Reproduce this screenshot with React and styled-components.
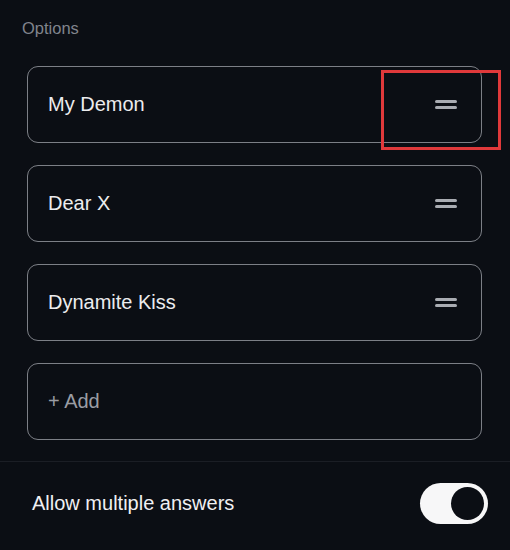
import React from "react";
import styled, { createGlobalStyle } from "styled-components";

const GlobalStyle = createGlobalStyle`
  html, body {
    margin: 0;
    padding: 0;
    background: #0b0e14;
  }
  body {
    font-family: "Liberation Sans", Arial, sans-serif;
    -webkit-font-smoothing: antialiased;
  }
`;

const Page = styled.div`
  width: 510px;
  height: 550px;
  background: #0b0e14;
  overflow: hidden;
  position: relative;
`;

const Section = styled.div`
  padding: 18px 28px 0 27px;
`;

const Label = styled.div`
  margin-left: -5px;
  color: #80848c;
  font-size: 16.5px;
  line-height: 20px;
`;

const List = styled.div`
  margin-top: 28px;
  display: flex;
  flex-direction: column;
  gap: 22px;
`;

const Card = styled.div`
  height: 75px;
  border: 1px solid #7c7f86;
  border-radius: 11px;
  display: flex;
  align-items: center;
  justify-content: space-between;
  padding: 0 24px 0 20px;
`;

const CardText = styled.span`
  font-size: 20px;
  color: ${(p) => (p.muted ? "#9a9da4" : "#ececee")};
`;

const Handle = styled.div`
  width: 22px;
  display: flex;
  flex-direction: column;
  gap: 3px;
  & > span {
    display: block;
    height: 3px;
    border-radius: 2px;
    background: #a9acb2;
  }
`;

const Divider = styled.div`
  margin-top: 21px;
  height: 1px;
  background: #1b1e25;
`;

const Row = styled.div`
  display: flex;
  align-items: center;
  justify-content: space-between;
  padding: 21px 22px 0 32px;
`;

const RowText = styled.span`
  font-size: 20px;
  color: #f0f0f2;
`;

const Toggle = styled.div`
  width: 68px;
  height: 41px;
  border-radius: 21px;
  background: #f7f7f8;
  display: flex;
  align-items: center;
  justify-content: flex-end;
  padding: 0 4px;
  box-sizing: border-box;
`;

const Knob = styled.div`
  width: 33px;
  height: 33px;
  border-radius: 50%;
  background: #0b0e14;
`;

const Highlight = styled.div`
  position: absolute;
  left: 381px;
  top: 70px;
  width: 114px;
  height: 74px;
  border: 3px solid #e0393b;
`;

const options = ["My Demon", "Dear X", "Dynamite Kiss"];

export default function App() {
  return (
    <Page>
      <GlobalStyle />
      <Section>
        <Label>Options</Label>
        <List>
          {options.map((o) => (
            <Card key={o}>
              <CardText>{o}</CardText>
              <Handle>
                <span />
                <span />
              </Handle>
            </Card>
          ))}
          <Card>
            <CardText muted>+ Add</CardText>
          </Card>
        </List>
      </Section>
      <Divider />
      <Row>
        <RowText>Allow multiple answers</RowText>
        <Toggle>
          <Knob />
        </Toggle>
      </Row>
      <Highlight />
    </Page>
  );
}
